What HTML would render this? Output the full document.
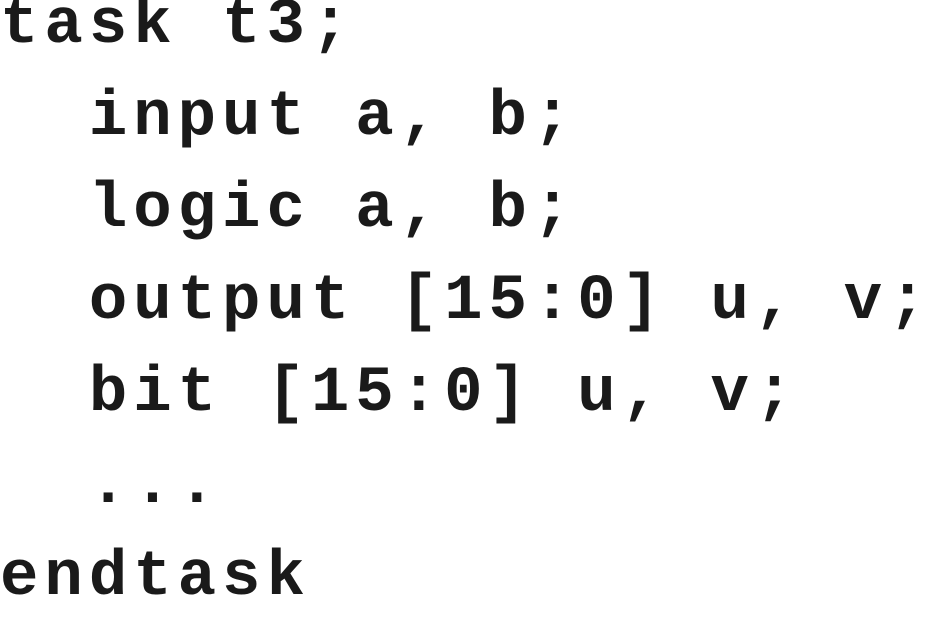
<!DOCTYPE html>
<html><head><meta charset="utf-8"><style>
html,body{margin:0;padding:0;background:#fff;width:928px;height:601px;overflow:hidden}
pre{position:absolute;left:0;top:-20px;margin:0;font-family:"Liberation Mono",monospace;font-weight:bold;font-size:64px;line-height:92px;letter-spacing:6px;color:#1a1a1a}
</style></head><body>
<pre>task t3;
  input a, b;
  logic a, b;
  output [15:0] u, v;
  bit [15:0] u, v;
  ...
endtask</pre>
</body></html>
